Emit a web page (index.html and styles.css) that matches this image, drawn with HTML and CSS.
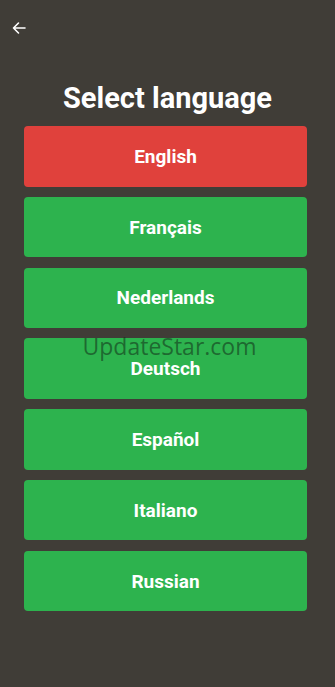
FILE: index.html
```html
<!DOCTYPE html>
<html>
	<head>
		<meta charset="utf-8">
		<title>Select language</title>
		<link rel="stylesheet" href="styles.css">
	</head>
	<body>
		<div class="screen">
			<div class="top-bar">
				<svg class="back" width="16" height="16" viewBox="0 0 16 16">
					<path d="M14 8H2.5M7.5 3L2.5 8l5 5" fill="none" stroke="#fff" stroke-width="1.6" stroke-linecap="round" stroke-linejoin="round"/>
				</svg>
			</div>
			<h1 class="title">Select language</h1>
			<ul class="lang-list">
				<li class="lang-btn active">English</li>
				<li class="lang-btn">Français</li>
				<li class="lang-btn">Nederlands</li>
				<li class="lang-btn">Deutsch</li>
				<li class="lang-btn">Español</li>
				<li class="lang-btn">Italiano</li>
				<li class="lang-btn">Russian</li>
			</ul>
			<div class="watermark">UpdateStar.com</div>
		</div>
	</body>
</html>
```
FILE: styles.css
```css
html,body{
	margin: 0;
	padding: 0;
	background: #403d37;
}
.screen{
	position: relative;
	width: 335px;
	height: 687px;
	font-family: Roboto, "Liberation Sans", sans-serif;
	color: #fff;
}
.top-bar{
	height: 56px;
	padding-left: 11px;
	display: flex;
	align-items: flex-start;
	padding-top: 20px;
	box-sizing: border-box;
}
.title{
	margin: 23px 0 0;
	text-align: center;
	font-size: 29px;
	font-weight: 700;
	line-height: 38px;
}
.lang-list{
	list-style: none;
	margin: 9px 0 0;
	padding: 0 28px 0 24px;
}
.lang-btn{
	height: 60.5px;
	margin-bottom: 10.3px;
	border-radius: 4px;
	background: #2db34e;
	display: flex;
	align-items: center;
	justify-content: center;
	font-size: 19px;
	font-weight: 700;
}
.lang-btn.active{
	background: #e0413c;
}
.watermark{
	position: absolute;
	left: 0;
	right: 0;
	top: 330px;
	text-align: center;
	padding-left: 4px;
	font-family: "Open Sans", sans-serif;
	font-size: 23px;
	color: rgba(20,55,28,0.6);
	pointer-events: none;
}
```
